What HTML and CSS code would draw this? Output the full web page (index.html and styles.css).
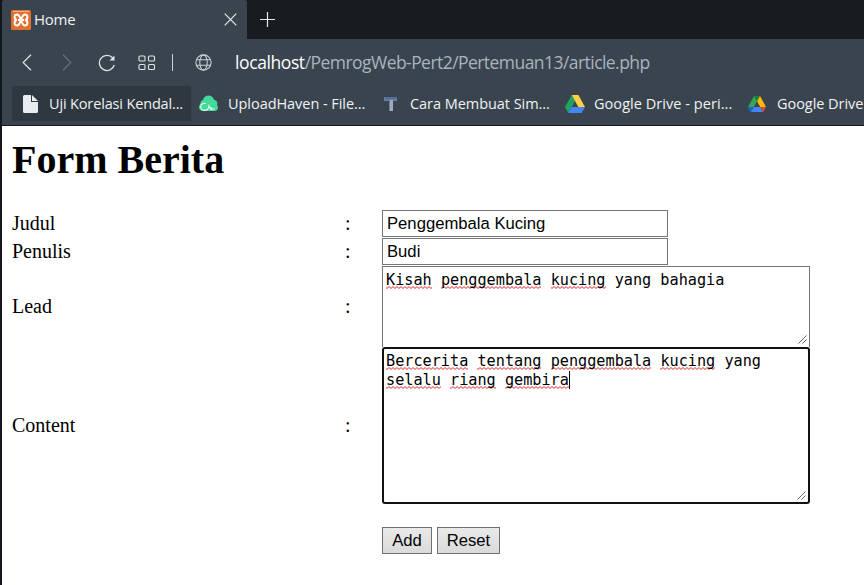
FILE: index.html
```html
<!DOCTYPE html>
<html lang="id">
<head>
<meta charset="utf-8">
<title>Home</title>
<link rel="stylesheet" href="styles.css">
</head>
<body>
<div class="window">
  <header class="chrome">
    <div class="tabs">
      <div class="tab">
        <svg class="favicon" width="20" height="20" viewBox="0 0 20 20"><rect width="20" height="20" rx="1.500" fill="#e0702f"/><path d="M2 1.500h16" stroke="#f1b48e" stroke-width="1"/><path d="M10 10H7M10 10h3M6 10C2.500 9.500 3 4.500 6 4.500c2.500 0 2.500 2 4 5.500 1.500 3.500 1.500 5.500 4 5.500 3 0 3.500-5 0-5.500M14 10c3.500-.5 3-5.500 0-5.500-2.500 0-2.500 2-4 5.500-1.500 3.500-1.500 5.500-4 5.500-3 0-3.500-5 0-5.500" fill="none" stroke="#fff" stroke-width="1.900"/></svg>
        <span class="tab-title">Home</span>
        <svg class="close" width="13" height="13" viewBox="0 0 13 13"><path d="M.7.7l11.600 11.600M12.300.7L.7 12.300" stroke="#e6e9ec" stroke-width="1.200"/></svg>
      </div>
      <svg class="plus" width="15" height="15" viewBox="0 0 15 15"><path d="M7.500 0v15M0 7.500h15" stroke="#e6e9ec" stroke-width="1.200"/></svg>
    </div>
    <div class="toolbar">
      <svg width="10" height="17" viewBox="0 0 10 17"><path d="M9 .8L1.200 8.500 9 16.200" fill="none" stroke="#dfe4e8" stroke-width="1.200"/></svg>
      <svg class="forward" width="10" height="17" viewBox="0 0 10 17"><path d="M1 .8l7.800 7.700L1 16.200" fill="none" stroke="#66707b" stroke-width="1.200"/></svg>
      <svg class="reload" width="18" height="18" viewBox="0 0 18 18"><path d="M14.800 4A7.600 7.600 0 1 0 16.300 11" fill="none" stroke="#dfe4e8" stroke-width="1.300"/><path d="M16.500 1.500v5h-5z" fill="#dfe4e8"/></svg>
      <svg class="speed" width="18" height="16" viewBox="0 0 18 16"><g fill="none" stroke="#dfe4e8" stroke-width="1.100"><rect x="1" y="1" width="6" height="5" rx="1"/><rect x="10.500" y="1" width="6" height="5" rx="1"/><rect x="1" y="9.500" width="6" height="5" rx="1"/><rect x="10.500" y="9.500" width="6" height="5" rx="1"/></g></svg>
      <span class="divider"></span>
      <svg class="globe" width="17" height="17" viewBox="0 0 17 17"><g fill="none" stroke="#c9d0d7" stroke-width="1.100"><circle cx="8.500" cy="8.500" r="7.600"/><ellipse cx="8.500" cy="8.500" rx="3.700" ry="7.600"/><path d="M1.500 5.800h14M1.500 11.200h14"/></g></svg>
      <div class="url"><span class="host">localhost</span>/PemrogWeb-Pert2/Pertemuan13/article.php</div>
    </div>
    <nav class="bookmarks">
      <div class="bookmark active"><svg width="15" height="18" viewBox="0 0 15 18"><path d="M1.500 0H8v7h7v9.500a1.500 1.500 0 0 1-1.500 1.500h-12A1.500 1.500 0 0 1 0 16.500v-15A1.500 1.500 0 0 1 1.500 0z" fill="#e9ecef"/><path d="M9 0l6 6H9z" fill="#e9ecef"/></svg><span class="label uji">Uji Korelasi Kendal...</span></div>
      <div class="bookmark upload"><svg width="21" height="17" viewBox="0 0 21 17"><path d="M4 16a4 4 0 0 1-1.500-7C2 6 4.500 5 5 5c1-6 10-6 11 0 3 0 4 3 3 5 2 2 1 6-2 6z" fill="#45d79b"/><path d="M8 8.500c-5-1-6.500 3-4.500 5.500s6 1.500 7-1l.5-2c1 3 3 4 5.500 2.500M13 12v3" fill="none" stroke="#e4fff5" stroke-width="1.200"/></svg><span class="label haven">UploadHaven - File...</span></div>
      <div class="bookmark tutorial"><svg width="14" height="16" viewBox="0 0 14 16"><path d="M0 1h13v4H9v10H5V5H0z" fill="#687d99"/><path d="M6 4h3v11H6z" fill="#9eabb8"/><path d="M1 1h12v2H1z" fill="#526e9a"/></svg><span class="label cara">Cara Membuat Sim...</span></div>
      <div class="bookmark drive"><svg width="20" height="18" viewBox="0 0 20 18"><path d="M6.800 0L0 12l3.300 6L10 6z" fill="#20a464"/><path d="M6.800 0h6.600L20 12h-6.700z" fill="#ffcf48"/><path d="M6.600 12H20l-3.400 6H3.300z" fill="#4387f5"/></svg><span class="label peri">Google Drive - peri...</span></div>
      <div class="bookmark drive2"><svg width="18" height="16" viewBox="0 0 18 16"><path d="M6 0h6L9 5.300z" fill="#188038"/><path d="M6 0L0 11h5.800L9 5.300z" fill="#34a853"/><path d="M12 0l6 11h-5.800L9 5.300z" fill="#fbbc04"/><path d="M5.800 11h6.400l3 5H2.800z" fill="#4285f4"/><path d="M0 11h5.800l-3 5-1-.8z" fill="#1967d2"/><path d="M12.200 11H18l-2.800 5z" fill="#ea4335"/></svg><span class="label">Google Drive</span></div>
    </nav>
  </header>
  <main class="page">
    <h1>Form Berita</h1>
    <form class="form">
      <label class="line">Judul</label><span class="line">:</span><div class="input">Penggembala Kucing</div>
      <label class="line">Penulis</label><span class="line">:</span><div class="input">Budi</div>
      <label>Lead</label><span>:</span>
      <div class="area lead"><u>Kisah</u> <u>penggembala</u> <u>kucing</u> yang bahagia<svg class="grip" width="9" height="9" viewBox="0 0 9 9"><path d="M.5 8.500l8-8M4.500 8.500l4-4" stroke="#666"/></svg></div>
      <label>Content</label><span>:</span>
      <div class="area content"><u>Bercerita</u> <u>tentang</u> <u>penggembala</u> <u>kucing</u> yang<br><u>selalu</u> <u>riang</u> <u>gembira</u><i class="caret"></i><svg class="grip" width="9" height="9" viewBox="0 0 9 9"><path d="M.5 8.500l8-8M4.500 8.500l4-4" stroke="#666"/></svg></div>
      <div class="actions"><button class="add" type="button">Add</button><button class="reset" type="button">Reset</button></div>
    </form>
  </main>
</div>
</body>
</html>
```
FILE: styles.css
```css
* { box-sizing: border-box; }
body { margin: 0; background: #fff; }
svg { display: block; flex: none; }
.window { width: 864px; height: 585px; overflow: hidden; border-left: 2px solid #14171d; }
.chrome { height: 126px; background: #3a444f; border-bottom: 1px solid #15181d; font-family: "Open Sans", "Noto Sans", sans-serif; color: #f0f2f4; }
.tabs { height: 39px; background: #181b20; display: flex; align-items: center; }
.tab { width: 245px; height: 39px; background: #3a444f; display: flex; align-items: center; padding: 0 10px 0 9px; border-radius: 2px 2px 0 0; }
.tab-title { font-size: 15px; margin-left: 3px; padding-bottom: 2px; letter-spacing: -.25px; }
.close { margin-left: auto; }
.plus { margin-left: 13px; margin-top: -1px; }
.toolbar { height: 47px; display: flex; align-items: center; padding-left: 20px; }
.forward { margin-left: 30px; }
.reload { margin-left: 26px; }
.speed { margin-left: 22px; }
.divider { width: 1px; height: 17px; margin-left: 16px; background: #c9d0d7; }
.globe { margin-left: 22px; }
.url { margin-left: 23px; padding-bottom: 1px; font-size: 17.5px; white-space: nowrap; color: #a9b3be; letter-spacing: -.55px; }
.host { color: #fff; letter-spacing: -.4px; }
.bookmarks { height: 35px; display: flex; padding-left: 10px; }
.bookmark { display: flex; align-items: center; flex: none; white-space: nowrap; }
.label { font-size: 14.5px; letter-spacing: -.05px; margin-left: 10px; }
.active { width: 179px; background: #2f3740; padding-left: 11px; }
.active .label { margin-left: 11px; letter-spacing: -.15px; }
.upload { width: 187px; padding-left: 7px; }
.upload .label { margin-left: 9px; }
.tutorial { width: 181px; padding-left: 6px; }
.tutorial .label { margin-left: 12px; }
.drive { width: 183px; padding-left: 6px; }
.drive .label { margin-left: 9px; letter-spacing: .05px; }
.drive2 { padding-left: 6px; }
.drive2 .label { margin-left: 11px; }
.page { padding: 11px 0 0 10px; font-family: "Liberation Serif", serif; font-size: 20px; color: #000; }
h1 { font-size: 40px; line-height: 46px; margin: 0 0 27px; }
.form { display: grid; grid-template-columns: 333px 37px 428px; grid-template-rows: 28px 28px 81px 157px; align-items: center; line-height: 23px; }
.line { padding-bottom: 2px; }
.input { align-self: start; width: 286px; height: 27px; border: 1px solid #767676; padding: 1px 4px; font: 16.67px/24px "Liberation Sans", sans-serif; }
.area { position: relative; width: 428px; border: 1px solid #767676; font: 15.2px/19px "DejaVu Sans Mono", monospace; white-space: pre; }
.lead { height: 81px; border-bottom: 0; padding: 4px 3px; }
.content { height: 157px; border: 2px solid #111; border-radius: 3px; padding: 3px 2px; }
.area u { text-decoration: none; background: url("data:image/svg+xml,%3Csvg xmlns='http://www.w3.org/2000/svg' width='4' height='3'%3E%3Cpath d='M-1 .5L1 2.5 3 .5 5 2.5' fill='none' stroke='%23e02020' stroke-width='1'/%3E%3C/svg%3E") repeat-x left bottom; }
.caret { display: inline-block; width: 1px; height: 18px; background: #000; vertical-align: -4px; margin-top: -4px; }
.grip { position: absolute; right: 2px; bottom: 2px; }
.lead .grip { bottom: 3px; }
.actions { grid-column: 3; display: flex; gap: 5px; margin-top: 23px; }
button { height: 27px; padding: 0; border: 1px solid #707070; background: linear-gradient(#e9e9e9, #dadada); color: #000; font: 16.67px/23px "Liberation Sans", sans-serif; }
.add { width: 50px; }
.reset { width: 63px; }
```
